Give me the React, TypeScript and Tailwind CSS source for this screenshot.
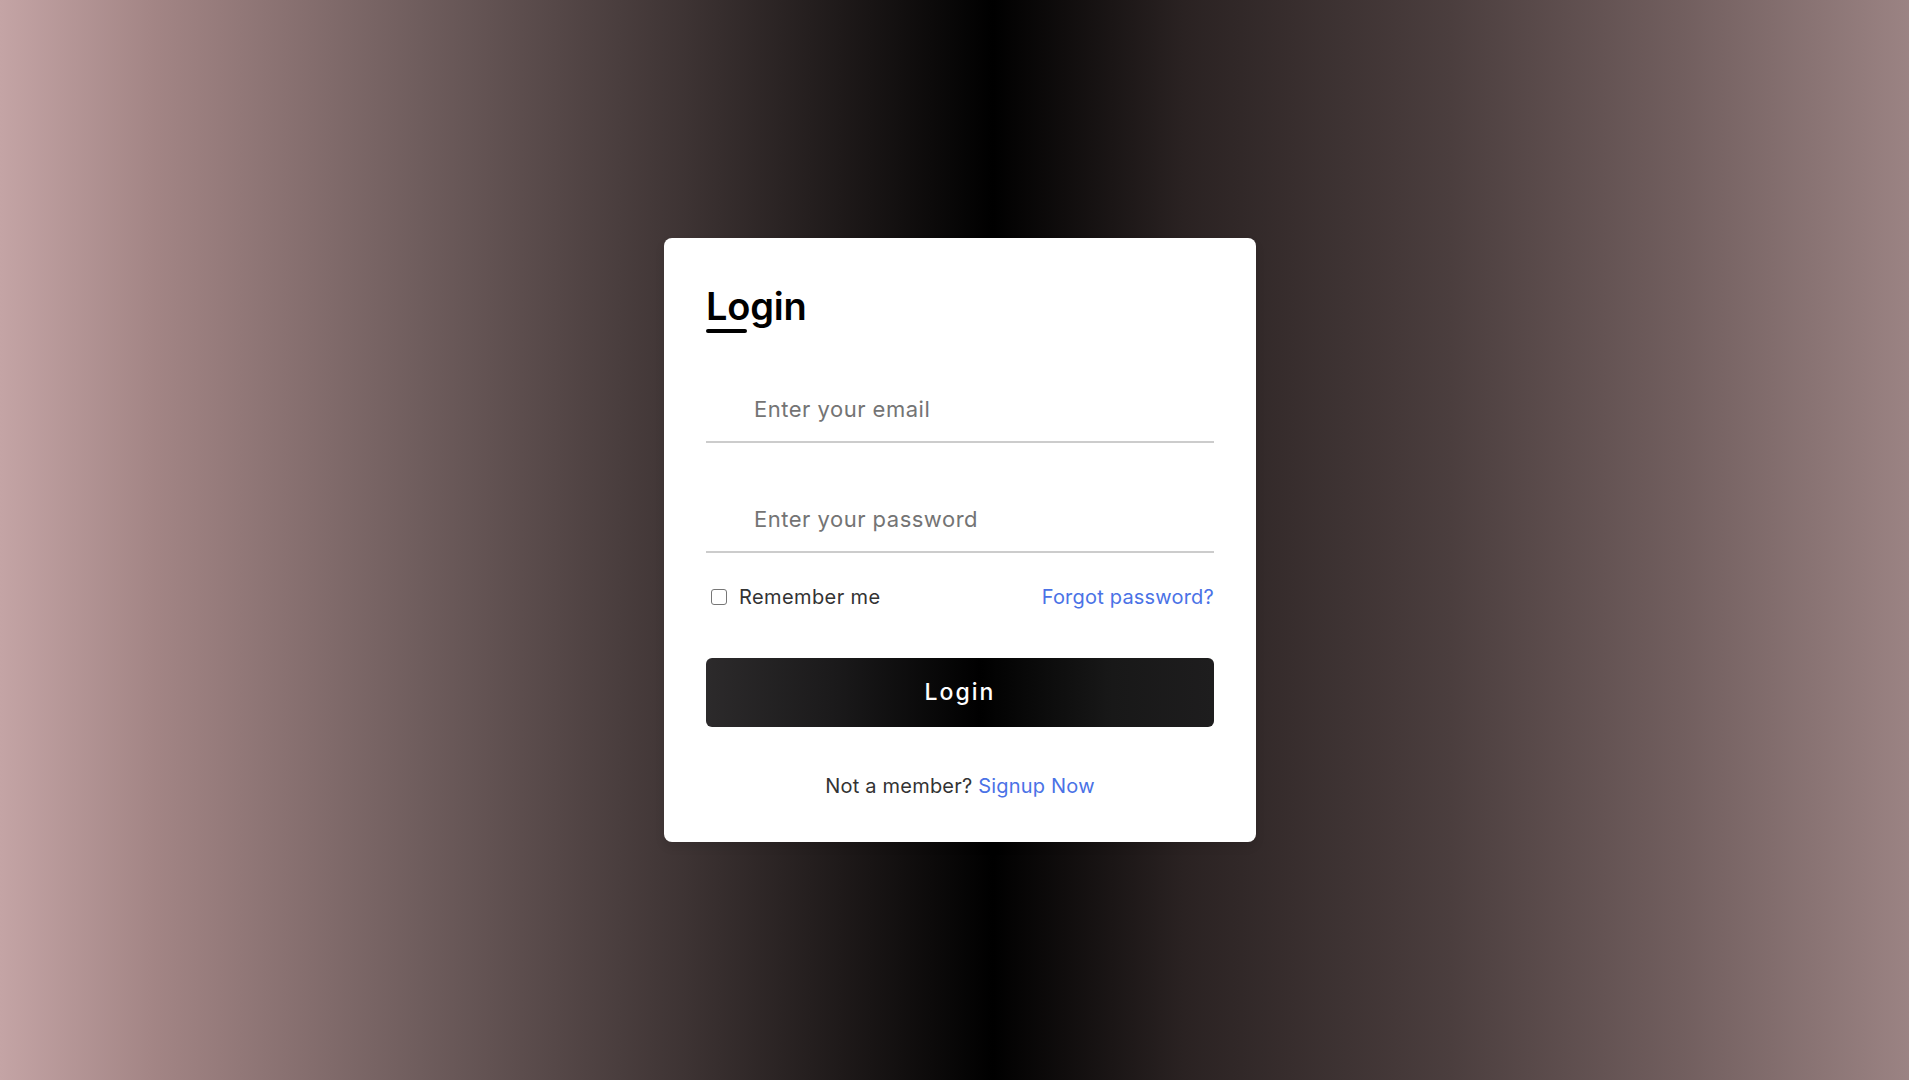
import { useState } from 'react'

export default function App() {
  const [remember, setRemember] = useState(false)

  return (
    <div className="min-h-screen w-full flex items-center justify-center pl-[11px] bg-[linear-gradient(to_right,#c4a4a5_0%,#a38585_8%,#6f5d5d_22%,#3d3333_36%,#000_52%,#2a2222_62%,#4b3e3e_76%,#715e5e_88%,#9b8383_100%)] font-['Inter','Liberation_Sans',sans-serif]">
      <div className="w-[592px] bg-white rounded-[8px] px-[42px] pt-[45px] pb-[42px] shadow-[0_5px_10px_rgba(0,0,0,0.1)]">
        {/* Title */}
        <h1 className="text-[38px] leading-[46px] font-semibold text-black tracking-[-0.2px]">Login</h1>
        <div className="h-[4px] w-[41px] rounded-full bg-black" />

        {/* Inputs */}
        <div className="mt-[44px] h-[66px] border-b-2 border-[#cccccc] flex items-center">
          <input
            type="email"
            placeholder="Enter your email"
            className="w-full h-full pl-[48px] text-[22px] tracking-[0.5px] text-[#333] placeholder:text-[#747474] outline-none bg-transparent"
          />
        </div>
        <div className="mt-[44px] h-[66px] border-b-2 border-[#cccccc] flex items-center">
          <input
            type="password"
            placeholder="Enter your password"
            className="w-full h-full pl-[48px] text-[22px] tracking-[0.5px] text-[#333] placeholder:text-[#747474] outline-none bg-transparent"
          />
        </div>

        {/* Remember / forgot */}
        <div className="mt-[30px] h-[28px] flex items-center justify-between">
          <label className="flex items-center gap-[12px] cursor-pointer">
            <span
              onClick={() => setRemember(!remember)}
              className="ml-[5px] w-[16px] h-[16px] rounded-[3px] border-[1.5px] border-[#767676] bg-white flex items-center justify-center"
            >
              {remember && <span className="w-[8px] h-[8px] bg-[#4070f4] rounded-[1px]" />}
            </span>
            <span className="text-[20px] tracking-[0.4px] text-[#333]">Remember me</span>
          </label>
          <a href="#" className="text-[20px] tracking-[0.2px] text-[#4a72e6]">Forgot password?</a>
        </div>

        {/* Button */}
        <button className="mt-[47px] w-full h-[69px] rounded-[6px] bg-[linear-gradient(to_right,#2c2a2b_0%,#1b1a1b_25%,#000_54%,#181818_80%,#1e1d1e_100%)] text-white text-[23px] font-medium tracking-[2px]">
          Login
        </button>

        {/* Signup */}
        <p className="mt-[45px] h-[28px] leading-[28px] text-center text-[20px] tracking-[0.2px] text-[#333]">
          Not a member? <a href="#" className="text-[#4a72e6]">Signup Now</a>
        </p>
      </div>
    </div>
  )
}
